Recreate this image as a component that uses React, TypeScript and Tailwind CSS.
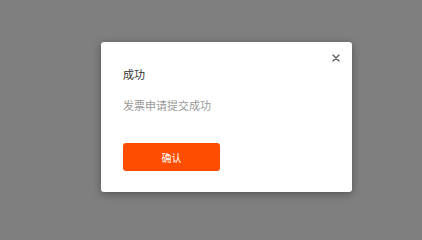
export default function App() {
  return (
    <div
      className="w-full h-screen bg-[#7f7f7f] flex items-start pt-[42px] overflow-hidden"
      style={{ fontFamily: '"Noto Sans CJK SC", "Liberation Sans", sans-serif' }}
    >
      <div className="relative ml-[101px] w-[251px] h-[150px] bg-white rounded-[3px] shadow-[0_2px_8px_rgba(0,0,0,0.35)] px-[22px] pt-[24px]">
        <button className="absolute right-[11px] top-[11px] w-[10px] h-[10px] flex items-center justify-center text-[#666]">
          <svg width="8" height="8" viewBox="0 0 8 8">
            <path d="M1 1L7 7M7 1L1 7" stroke="currentColor" strokeWidth="1.5" strokeLinecap="round" />
          </svg>
        </button>
        <div className="text-[11px] leading-[16px] text-[#333]">成功</div>
        <div className="mt-[15px] text-[11px] leading-[16px] text-[#999]">发票申请提交成功</div>
        <button className="mt-[30px] w-[97px] h-[28px] rounded-[3px] bg-[#ff4d00] text-white text-[10px] flex items-center justify-center">
          确认
        </button>
      </div>
    </div>
  );
}
